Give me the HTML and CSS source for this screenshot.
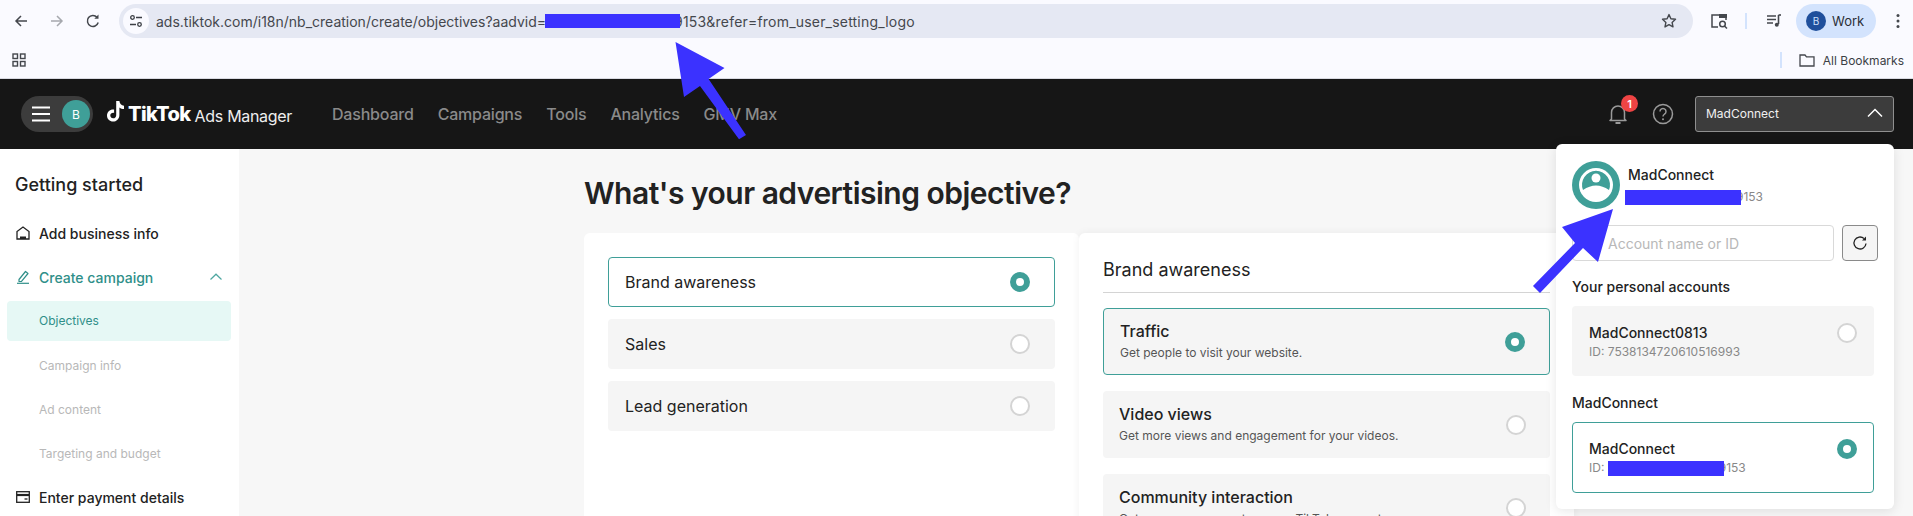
FILE: index.html

```html
<!DOCTYPE html>
<html>
<head>
    <title>TikTok Ads Manager</title>
    <link rel="stylesheet" href="styles.css">
</head>
<body>
    <!-- browser chrome -->
    <div class="toolbar">
        <svg class="nav-icon back" width="16" height="16" viewBox="0 0 16 16"><path d="M14 8H3M8 3L3 8l5 5" fill="none" stroke="#44474d" stroke-width="1.5"/></svg>
        <svg class="nav-icon forward" width="16" height="16" viewBox="0 0 16 16"><path d="M2 8h11M8 3l5 5-5 5" fill="none" stroke="#a6a8ae" stroke-width="1.5"/></svg>
        <svg class="nav-icon reload" width="16" height="16" viewBox="0 0 16 16"><path d="M13.2 9.500A5.500 5.500 0 1 1 12 4.200" fill="none" stroke="#44474d" stroke-width="1.5"/><path d="M13.500 1.500v4.200H9.300z" fill="#44474d"/></svg>
        <div class="url-pill">
            <span class="site-icon">
                <svg width="14" height="14" viewBox="0 0 14 14"><g fill="none" stroke="#3c3f45" stroke-width="1.3"><circle cx="3.500" cy="3.500" r="1.800"/><circle cx="10.500" cy="10.500" r="1.800"/><path d="M7 3.500h6M1 10.500h6"/></g></svg>
            </span>
            <span class="url-text">ads.tiktok.com/i18n/nb_creation/create/objectives?aadvid=<span class="redact url-redact"></span><span class="url-tail">9153&amp;refer=from_user_setting_logo</span></span>
            <svg class="star" width="16" height="16" viewBox="0 0 16 16"><path d="M8 1.600l1.900 4.200 4.600.5-3.400 3.100.9 4.500L8 11.600l-4 2.300.9-4.500L1.500 6.300l4.600-.5z" fill="none" stroke="#44474d" stroke-width="1.400" stroke-linejoin="round"/></svg>
        </div>
        <svg class="tab-search" width="18" height="18" viewBox="0 0 18 18"><path d="M8 15H2V3h14v5" fill="none" stroke="#44474d" stroke-width="1.5"/><rect x="9" y="2" width="8" height="4" fill="#44474d"/><circle cx="12.500" cy="12" r="2.800" fill="none" stroke="#44474d" stroke-width="1.5"/><path d="M14.500 14l2.500 2.500" stroke="#44474d" stroke-width="1.5"/></svg>
        <span class="divider"></span>
        <svg class="media" width="16" height="16" viewBox="0 0 16 16"><path d="M1 3h9M1 6.500h9M1 10h6" stroke="#44474d" stroke-width="1.400"/><path d="M12.500 2v9" stroke="#44474d" stroke-width="1.600"/><path d="M12.500 2H15" stroke="#44474d" stroke-width="1.600"/><circle cx="10.800" cy="11.800" r="2" fill="#44474d"/></svg>
        <div class="profile-pill">
            <span class="profile-avatar">B</span>
            <span>Work</span>
        </div>
        <svg class="dots" width="4" height="16" viewBox="0 0 4 16"><circle cx="2" cy="2.500" r="1.500"/><circle cx="2" cy="8" r="1.500"/><circle cx="2" cy="13.500" r="1.500"/></svg>
    </div>

    <div class="bookmarks">
        <svg class="apps" width="14" height="14" viewBox="0 0 14 14"><g fill="none" stroke="#44474d" stroke-width="1.400"><rect x="1" y="1" width="4.500" height="4.500"/><rect x="8.500" y="1" width="4.500" height="4.500"/><rect x="1" y="8.500" width="4.500" height="4.500"/><rect x="8.500" y="8.500" width="4.500" height="4.500"/></g></svg>
        <span class="divider bm-divider"></span>
        <svg class="folder" width="16" height="14" viewBox="0 0 16 14"><path d="M1 2h5l1.500 1.800H15V13H1z" fill="none" stroke="#44474d" stroke-width="1.300"/></svg>
        <span class="bm-label">All Bookmarks</span>
    </div>

    <!-- ads manager header -->
    <header class="topbar">
        <div class="menu-pill">
            <svg width="18" height="16" viewBox="0 0 18 16"><path d="M0 1.500h18M0 8h18M0 14.500h18" stroke="#fff" stroke-width="2"/></svg>
            <span class="menu-avatar">B</span>
        </div>
        <div class="logo">
            <svg class="logo-note" width="18" height="21" viewBox="0 0 18 21"><path d="M9.200 0h3.200c.2 2.600 1.900 4.400 4.600 4.700v3.200c-1.800 0-3.300-.5-4.600-1.500v7.500c0 4-3 6.600-6.400 6.600C2.700 20.500 0 18 0 14.500c0-3.800 3.200-6.500 7.100-6v3.400c-2-.5-3.800.7-3.800 2.600 0 1.600 1.200 2.800 2.800 2.800 1.800 0 3.100-1.200 3.100-3.100z" fill="#fff"/></svg>
            <span class="logo-word">TikTok</span>
            <span class="logo-sub">Ads Manager</span>
        </div>
        <nav class="nav">
            <a>Dashboard</a>
            <a>Campaigns</a>
            <a>Tools</a>
            <a>Analytics</a>
            <a>GMV Max</a>
        </nav>
        <div class="bell">
            <svg width="20" height="22" viewBox="0 0 20 22"><path d="M3.500 16V9.500a6.500 6.500 0 0 1 13 0V16l1.500 1.500H2z" fill="none" stroke="#9a9a9a" stroke-width="1.500" stroke-linejoin="round"/><path d="M7.500 20h5" stroke="#9a9a9a" stroke-width="2"/></svg>
            <span class="badge">1</span>
        </div>
        <svg class="help" width="22" height="22" viewBox="0 0 22 22"><circle cx="11" cy="11" r="9.500" fill="none" stroke="#9a9a9a" stroke-width="1.500"/><path d="M8 8.500a3 3 0 1 1 4.600 2.500c-1 .7-1.600 1.200-1.600 2.500" fill="none" stroke="#9a9a9a" stroke-width="1.500"/><circle cx="11" cy="16.200" r="1" fill="#9a9a9a"/></svg>
        <div class="account-select">
            <span>MadConnect</span>
            <svg width="16" height="10" viewBox="0 0 16 10"><path d="M1 8.500l7-7 7 7" fill="none" stroke="#fff" stroke-width="1.500"/></svg>
        </div>
    </header>

    <div class="main">
        <aside class="sidebar">
            <h2>Getting started</h2>
            <div class="step">
                <svg width="14" height="14" viewBox="0 0 14 14"><path d="M1 13V5.500L7 1l6 4.500V13z" fill="none" stroke="#222" stroke-width="1.300"/><path d="M4 13h6v-2.500H4z" fill="#222"/></svg>
                Add business info
            </div>
            <div class="step step-active">
                <svg width="14" height="14" viewBox="0 0 14 14"><path d="M3 9.500L9.500 1.500 12 3.500 5.500 11.300 3 11.500z" fill="none" stroke="#2f8f89" stroke-width="1.200" stroke-linejoin="round"/><path d="M1 13.300h12" stroke="#2f8f89" stroke-width="1.200"/></svg>
                Create campaign
                <svg class="step-chevron" width="12" height="8" viewBox="0 0 12 8"><path d="M0.500 6.500L6 1.200l5.500 5.300" fill="none" stroke="#4fa7a1" stroke-width="1.200"/></svg>
            </div>
            <div class="substep current">Objectives</div>
            <div class="substep">Campaign info</div>
            <div class="substep">Ad content</div>
            <div class="substep">Targeting and budget</div>
            <div class="step">
                <svg width="14" height="12" viewBox="0 0 14 12"><rect x="0.700" y="0.700" width="12.600" height="10.600" fill="none" stroke="#222" stroke-width="1.300"/><path d="M1 4h12" stroke="#222" stroke-width="2.200"/><path d="M8.500 8h3" stroke="#222" stroke-width="1.300"/></svg>
                Enter payment details
            </div>
        </aside>

        <section class="content">
            <h1>What's your advertising objective?</h1>
            <div class="cards">
                <div class="card card-left">
                    <div class="option selected"><span>Brand awareness</span><span class="radio on"></span></div>
                    <div class="option"><span>Sales</span><span class="radio"></span></div>
                    <div class="option"><span>Lead generation</span><span class="radio"></span></div>
                </div>
                <div class="card card-right">
                    <h3>Brand awareness</h3>
                    <div class="goal selected">
                        <div><div class="goal-name">Traffic</div><div class="goal-desc">Get people to visit your website.</div></div>
                        <span class="radio on"></span>
                    </div>
                    <div class="goal">
                        <div><div class="goal-name">Video views</div><div class="goal-desc">Get more views and engagement for your videos.</div></div>
                        <span class="radio"></span>
                    </div>
                    <div class="goal">
                        <div><div class="goal-name">Community interaction</div><div class="goal-desc">Get more engagement on your TikTok account.</div></div>
                        <span class="radio"></span>
                    </div>
                </div>
            </div>
        </section>
    </div>

    <!-- account dropdown -->
    <div class="account-panel">
        <div class="panel-head">
            <svg width="48" height="48" viewBox="-24 -24 48 48"><circle r="24" fill="#3f9f98"/><circle r="17" fill="#fff"/><path d="M-13 5A14 14 0 1 1 13 5Q0-4-13 5z" fill="#3f9f98"/><circle cy="-7" r="4.500" fill="#fff"/></svg>
            <div>
                <div class="panel-name">MadConnect</div>
                <div class="panel-id"><span class="redact panel-redact"></span>9153</div>
            </div>
        </div>
        <div class="search-row">
            <div class="search-input">Account name or ID</div>
            <div class="refresh">
                <svg width="16" height="16" viewBox="0 0 16 16"><path d="M14 8.500A6 6 0 1 1 12 3.500" fill="none" stroke="#222" stroke-width="1.300"/><path d="M14 1.500v4h-4z" fill="#222"/></svg>
            </div>
        </div>
        <div class="panel-label">Your personal accounts</div>
        <div class="account-row">
            <div>
                <div class="account-name">MadConnect0813</div>
                <div class="account-id">ID: 7538134720610516993</div>
            </div>
            <span class="radio"></span>
        </div>
        <div class="panel-label">MadConnect</div>
        <div class="account-row selected">
            <div>
                <div class="account-name">MadConnect</div>
                <div class="account-id">ID: <span class="redact row-redact"></span>9153</div>
            </div>
            <span class="radio on"></span>
        </div>
    </div>

    <!-- annotation arrows drawn on the screenshot -->
    <svg class="arrows" width="1913" height="516" viewBox="0 0 1913 516">
        <polygon points="675.500,42 724.500,68 708.600,79 746,135 739,139.300 700,86 684,97"/>
        <polygon points="1613,209 1562,227 1575,243 1533,286 1540,293 1583,248 1598,262"/>
    </svg>
</body>
</html>
```

FILE: styles.css

```css
body {
    margin: 0;
    width: 1913px;
    height: 516px;
    overflow: hidden;
    position: relative;
    font-family: Inter, "Noto Sans", sans-serif;
    color: #222;
    background-color: #f7f7f7;
}

h1, h2, h3 {
    margin: 0;
}

/* browser chrome */
.toolbar {
    height: 42px;
    background-color: #fafaff;
    display: flex;
    align-items: center;
}

.nav-icon {
    flex: none;
}

.back {
    margin-left: 13px;
}

.forward {
    margin-left: 20px;
}

.reload {
    margin-left: 20px;
}

.url-pill {
    margin-left: 18px;
    width: 1574px;
    height: 34px;
    background-color: #e5e8f3;
    border-radius: 17px;
    display: flex;
    align-items: center;
    flex: none;
}

.site-icon {
    width: 26px;
    height: 26px;
    margin-left: 4px;
    background-color: #fafaff;
    border-radius: 50%;
    display: flex;
    align-items: center;
    justify-content: center;
}

.url-text {
    margin-left: 7px;
    font-size: 14px;
    color: #44474d;
    display: flex;
    align-items: center;
    white-space: pre;
}

.url-tail {
    letter-spacing: 0.2px;
}

.redact {
    display: inline-block;
    position: relative;
    background-color: #3b32ff;
}

.url-redact {
    width: 135px;
    height: 14px;
    margin: 0 -6px 0 -1px;
}

.star {
    margin-left: auto;
    margin-right: 16px;
}

.tab-search {
    margin-left: 17px;
}

.divider {
    width: 2px;
    height: 16px;
    background-color: #d3e3fd;
    margin-left: 17px;
}

.media {
    margin-left: 19px;
}

.profile-pill {
    margin-left: 14px;
    width: 80px;
    height: 34px;
    border-radius: 17px;
    background-color: #d3e3fd;
    display: flex;
    align-items: center;
    font-size: 13px;
    color: #2b2f36;
    flex: none;
}

.profile-avatar {
    width: 20px;
    height: 20px;
    margin: 0 6px 0 10px;
    border-radius: 50%;
    background-color: #1f4f9c;
    color: #cfe0fb;
    font-size: 10px;
    display: flex;
    align-items: center;
    justify-content: center;
}

.dots {
    margin-left: 20px;
    fill: #44474d;
}

.bookmarks {
    height: 36px;
    background-color: #fafaff;
    border-bottom: 1px solid #d9dae2;
    display: flex;
    align-items: center;
    padding-left: 12px;
}

.bm-divider {
    margin-left: auto;
}

.folder {
    margin-left: 17px;
}

.bm-label {
    margin-left: 8px;
    margin-right: 9px;
    font-size: 12px;
    color: #3c3f45;
}

/* ads manager header */
.topbar {
    height: 70px;
    background-color: #161616;
    display: flex;
    align-items: center;
}

.menu-pill {
    margin-left: 21px;
    width: 72px;
    height: 36px;
    border-radius: 18px;
    background-color: #3c3c3c;
    display: flex;
    align-items: center;
    flex: none;
    padding-left: 11px;
    box-sizing: border-box;
}

.menu-avatar {
    width: 28px;
    height: 28px;
    margin-left: 12px;
    border-radius: 50%;
    background-color: #3f9f98;
    color: #fff;
    font-size: 12px;
    display: flex;
    align-items: center;
    justify-content: center;
}

.logo {
    margin-left: 14px;
    display: flex;
    align-items: center;
    color: #fff;
    width: 225px;
    flex: none;
}

.logo-note {
    margin-top: -6px;
}

.logo-word {
    margin-left: 3px;
    font-size: 20px;
    font-weight: 800;
    letter-spacing: -0.6px;
}

.logo-sub {
    margin-left: 4px;
    font-size: 16px;
    letter-spacing: -0.3px;
    margin-top: 3px;
    color: #eee;
}

.nav {
    display: flex;
    gap: 24px;
    font-size: 16px;
    font-weight: 500;
    letter-spacing: -0.2px;
    color: #8a8a8a;
}

.bell {
    margin-left: auto;
    position: relative;
    height: 22px;
}

.badge {
    position: absolute;
    left: 13px;
    top: -8px;
    width: 17px;
    height: 17px;
    border-radius: 50%;
    background-color: #ef4444;
    color: #fff;
    font-size: 11px;
    font-weight: 600;
    display: flex;
    align-items: center;
    justify-content: center;
}

.help {
    margin-left: 24px;
}

.account-select {
    margin-left: 21px;
    margin-right: 19px;
    width: 199px;
    height: 36px;
    box-sizing: border-box;
    background-color: #3c3c3c;
    border: 1px solid #8f8f8f;
    border-radius: 3px;
    display: flex;
    align-items: center;
    justify-content: space-between;
    padding: 0 10px 2px 10px;
    font-size: 12px;
    color: #f0f0f0;
}

/* page body */
.main {
    display: flex;
    height: 367px;
}

.sidebar {
    width: 239px;
    flex: none;
    background-color: #fff;
    padding-top: 24px;
    box-sizing: border-box;
}

.sidebar h2 {
    font-size: 18px;
    font-weight: 500;
    line-height: 24px;
    padding-left: 15px;
    margin-bottom: 14px;
}

.step {
    height: 44px;
    display: flex;
    align-items: center;
    padding-left: 16px;
    font-size: 14px;
    font-weight: 500;
    gap: 9px;
}

.step-active {
    color: #2f8f89;
}

.step-chevron {
    margin-left: auto;
    margin-right: 17px;
}

.substep {
    height: 44px;
    display: flex;
    align-items: center;
    padding-left: 39px;
    font-size: 12px;
    color: #b8b8b8;
    box-sizing: border-box;
}

.substep.current {
    height: 40px;
    margin: 2px 8px 2px 7px;
    padding-left: 32px;
    padding-bottom: 1px;
    background-color: #e6f8f5;
    border-radius: 4px;
    color: #2f8f89;
}

.content {
    padding-left: 345px;
    flex: 1;
}

h1 {
    font-size: 30px;
    font-weight: 600;
    line-height: 36px;
    padding-top: 26px;
    letter-spacing: -0.5px;
}

.cards {
    display: flex;
    margin-top: 22px;
    height: 300px;
}

.card {
    background-color: #fff;
    border-radius: 6px 6px 0 0;
}

.card-left {
    width: 495px;
    padding: 24px 24px 0;
    box-sizing: border-box;
}

.card-right {
    width: 495px;
    padding: 24px 24px 0;
    box-sizing: border-box;
    box-shadow: 0 0 8px rgba(0, 0, 0, 0.06);
}

.option {
    height: 50px;
    margin-bottom: 12px;
    background-color: #f5f5f5;
    border-radius: 4px;
    display: flex;
    align-items: center;
    justify-content: space-between;
    padding: 0 25px 0 17px;
    font-size: 16px;
    box-sizing: border-box;
}

.selected {
    background-color: #fff;
    border: 1px solid #3f9f98;
}

.option.selected {
    padding: 0 24px 0 16px;
}

.radio {
    width: 20px;
    height: 20px;
    flex: none;
    box-sizing: border-box;
    border-radius: 50%;
    border: 2px solid #d4d4d4;
    background-color: #fff;
}

.radio.on {
    border: 6px solid #3f9f98;
}

.card-right h3 {
    font-size: 18px;
    font-weight: 400;
    line-height: 26px;
    height: 35px;
    border-bottom: 1px solid #d4d4d4;
    margin-bottom: 15px;
}

.goal {
    height: 67px;
    margin-bottom: 16px;
    background-color: #f5f5f5;
    border-radius: 4px;
    display: flex;
    align-items: center;
    justify-content: space-between;
    padding: 0 24px 0 16px;
    box-sizing: border-box;
}

.goal-name {
    font-size: 16px;
    font-weight: 500;
    line-height: 22px;
}

.goal-desc {
    font-size: 12px;
    line-height: 22px;
    color: #555;
}

/* account dropdown */
.account-panel {
    position: absolute;
    left: 1556px;
    top: 144px;
    width: 338px;
    height: 365px;
    box-sizing: border-box;
    padding: 17px 20px 0 16px;
    background-color: #fff;
    border-radius: 6px;
    box-shadow: 0 2px 12px rgba(0, 0, 0, 0.1);
}

.panel-head {
    display: flex;
    gap: 8px;
}

.panel-name {
    font-size: 14px;
    font-weight: 500;
    line-height: 20px;
    margin-top: 4px;
}

.panel-id {
    font-size: 12px;
    color: #888;
    line-height: 18px;
    margin: 3px 0 0 -3px;
    display: flex;
    align-items: center;
}

.panel-redact {
    width: 116px;
    height: 15px;
    margin-right: -5px;
}

.search-row {
    display: flex;
    gap: 8px;
    margin-top: 16px;
}

.search-input {
    width: 262px;
    height: 36px;
    flex: none;
    box-sizing: border-box;
    border: 1px solid #d9d9d9;
    border-radius: 4px;
    padding-left: 35px;
    display: flex;
    align-items: center;
    font-size: 14px;
    color: #b8b8b8;
}

.refresh {
    width: 36px;
    height: 36px;
    flex: none;
    box-sizing: border-box;
    border: 1px solid #8a8a8a;
    border-radius: 4px;
    background-color: #f5f5f5;
    display: flex;
    align-items: center;
    justify-content: center;
}

.panel-label {
    font-size: 14px;
    font-weight: 500;
    line-height: 20px;
    margin: 16px 0 9px;
}

.account-row + .panel-label {
    margin-top: 17px;
}

.account-row {
    height: 70px;
    box-sizing: border-box;
    background-color: #f5f5f5;
    border-radius: 4px;
    display: flex;
    justify-content: space-between;
    padding: 17px 17px 0 17px;
}

.account-row.selected {
    height: 71px;
    background-color: #fff;
    padding: 16px 16px 0 16px;
}

.account-name {
    font-size: 14px;
    font-weight: 500;
    line-height: 20px;
}

.account-id {
    font-size: 12px;
    color: #888;
    line-height: 18px;
    display: flex;
    align-items: center;
    white-space: pre;
}

.row-redact {
    width: 116px;
    height: 15px;
    margin-right: -5px;
}

.arrows {
    position: absolute;
    left: 0;
    top: 0;
    fill: #3b32ff;
}
```
